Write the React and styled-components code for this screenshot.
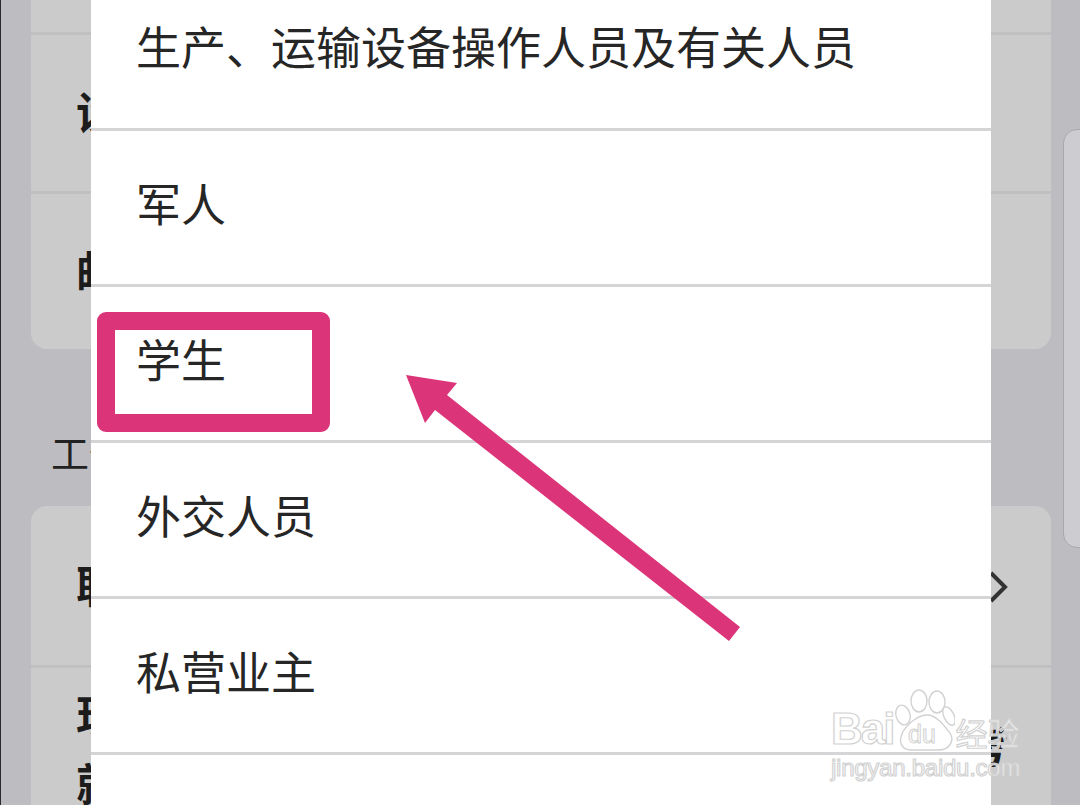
import styled, { createGlobalStyle } from "styled-components";

const GlobalStyle = createGlobalStyle`
  html, body {
    margin: 0;
    padding: 0;
    background: #bdbdc1;
  }
  * {
    box-sizing: border-box;
  }
`;

const Screen = styled.div`
  position: relative;
  width: 1080px;
  height: 805px;
  overflow: hidden;
  background: #bdbdc1;
  border-left: 1px solid #2a2a2c;
  font-family: "Liberation Sans", "Noto Sans CJK SC", sans-serif;
`;

const Back = styled.div`
  width: 1020px;
  margin-left: 30px;
`;

const Card = styled.div`
  background: #cbcbcb;
  border-radius: ${(p) => (p.$top ? "0 0 16px 16px" : "16px 16px 0 0")};
`;

const BackRow = styled.div`
  height: ${(p) => p.$h}px;
  padding: 0 0 4px 45px;
  display: flex;
  align-items: center;
  justify-content: space-between;
  border-bottom: ${(p) => (p.$last ? "none" : "3px solid #c0c0c3")};
  font-size: 44px;
  font-weight: 700;
  color: #1c1c1c;
`;

const TallRow = styled(BackRow)`
  align-items: flex-start;
  padding-top: 16px;
  line-height: 68px;
`;

const RowValue = styled.span`
  margin: 30px 42px 0 0;
`;

const Chevron = styled.svg`
  width: 20px;
  height: 34px;
  margin: 6px 43px 0 0;
`;

const SectionLabel = styled.div`
  height: 157px;
  padding: 84px 0 0 20px;
  font-size: 38px;
  line-height: 44px;
  color: #222;
`;

const Modal = styled.ul`
  position: absolute;
  left: 90px;
  top: 0;
  width: 900px;
  margin: 0;
  padding: 0;
  list-style: none;
  background: #fff;
`;

const Option = styled.li`
  height: ${(p) => p.$h || 156}px;
  padding: ${(p) => p.$pad ?? 50}px 0 0 45px;
  border-bottom: 3px solid #d5d5d8;
  font-size: 45px;
  line-height: 52px;
  color: #262626;

  &:last-child {
    border-bottom: none;
  }
`;

const Marker = styled.div`
  position: absolute;
  left: 96px;
  top: 312px;
  width: 233px;
  height: 120px;
  border: 18px solid #dc3478;
  border-radius: 9px;
`;

const ArrowLayer = styled.svg`
  position: absolute;
  inset: 0;
`;

const Drawer = styled.div`
  position: absolute;
  left: 1062px;
  top: 129px;
  width: 30px;
  height: 419px;
  background: #cdcdd1;
  border: 1px solid #a9a9ad;
  border-radius: 14px 0 0 14px;
`;

const Watermark = styled.div`
  position: absolute;
  left: 830px;
  top: 689px;
  display: flex;
  flex-direction: column;
  gap: 4px;
`;

const MarkTop = styled.div`
  display: flex;
  align-items: flex-end;
  height: 62px;
`;

const MarkText = styled.span`
  font-size: ${(p) => p.$size}px;
  line-height: ${(p) => p.$line || 1};
  font-weight: ${(p) => p.$weight || 400};
  letter-spacing: ${(p) => p.$spacing || 0}px;
  margin-left: ${(p) => p.$gap || 0}px;
  color: rgba(255, 255, 255, 0.72);
  -webkit-text-stroke: 1.2px #d2d2d2;
  white-space: nowrap;
`;

const Paw = styled.svg`
  width: 60px;
  height: 62px;
  margin-left: 2px;
`;

const options = [
  { label: "生产、运输设备操作人员及有关人员", h: 131, pad: 24 },
  { label: "军人" },
  { label: "学生" },
  { label: "外交人员" },
  { label: "私营业主" },
  { label: "" },
];

export default function App() {
  return (
    <Screen>
      <GlobalStyle />
      <Back>
        <Card $top>
          <BackRow $h={35} />
          <BackRow $h={159}>设备</BackRow>
          <BackRow $h={155} $last>邮箱</BackRow>
        </Card>
        <SectionLabel>工作信息</SectionLabel>
        <Card>
          <BackRow $h={162}>
            职业
            <Chevron viewBox="0 0 20 34">
              <path d="M3 3 L17 17 L3 31" fill="none" stroke="#333" strokeWidth="4" />
            </Chevron>
          </BackRow>
          <TallRow $h={140} $last>
            <span>现居住<br />就业</span>
            <RowValue>考</RowValue>
          </TallRow>
        </Card>
      </Back>
      <Drawer />
      <Modal>
        {options.map((o, i) => (
          <Option key={i} $h={o.h} $pad={o.pad}>{o.label}</Option>
        ))}
      </Modal>
      <Marker />
      <ArrowLayer width="1080" height="805" viewBox="0 0 1080 805">
        <polygon
          points="405,375 456,383 446,395 739,627 728,641 434,410 424,423"
          fill="#dc3478"
        />
      </ArrowLayer>
      <Watermark>
        <MarkTop>
          <MarkText $size={44} $weight={700} $spacing={-2}>Bai</MarkText>
          <Paw viewBox="0 0 60 62">
            <g fill="rgba(255,255,255,0.6)" stroke="#d2d2d2" strokeWidth="1.4">
              <ellipse cx="24" cy="12" rx="8" ry="11" />
              <ellipse cx="42" cy="13" rx="8" ry="11" />
              <ellipse cx="8" cy="26" rx="7" ry="10" transform="rotate(-15 8 26)" />
              <ellipse cx="54" cy="27" rx="5" ry="10" transform="rotate(-25 54 27)" />
              <path d="M6 48 C 8 38 22 26 32 26 C 42 26 50 38 55 44 C 60 52 54 61 44 61 L 16 61 C 9 61 4 56 6 48 Z" />
            </g>
            <text x="13" y="54" fontSize="25" fill="rgba(255,255,255,0.7)" stroke="#d2d2d2" strokeWidth="1">du</text>
          </Paw>
          <MarkText $size={32}>经验</MarkText>
        </MarkTop>
        <MarkText $size={24} $line={1.05} $spacing={-0.25}>jingyan.baidu.com</MarkText>
      </Watermark>
    </Screen>
  );
}
